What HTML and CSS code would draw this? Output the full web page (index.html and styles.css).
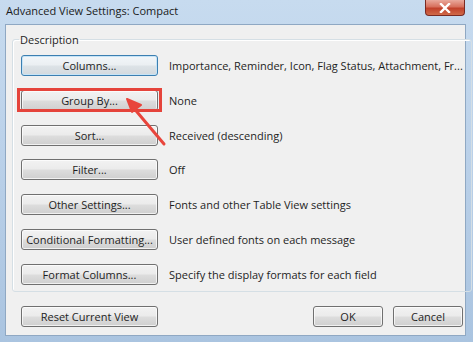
FILE: index.html
```html
<!DOCTYPE html>
<html lang="en">
<head>
    <meta charset="UTF-8">
    <title>Advanced View Settings: Compact</title>
    <link rel="stylesheet" href="styles.css">
</head>
<body>
    <div class="window">
        <div class="titlebar">
            <span class="title">Advanced View Settings: Compact</span>
            <span class="close-btn">
                <svg width="12" height="10" viewBox="0 0 12 10">
                    <path d="M2 1 L10 9 M10 1 L2 9" stroke="#fff" stroke-width="2.4" stroke-linecap="square"/>
                </svg>
            </span>
        </div>
        <div class="client">
            <fieldset class="group-box">
                <legend>Description</legend>
                <div class="settings-grid">
                    <button class="btn focused">Columns...</button>
                    <span class="desc">Importance, Reminder, Icon, Flag Status, Attachment, Fr...</span>

                    <span class="highlight-wrap">
                        <button class="btn">Group By...</button>
                        <span class="highlight"></span>
                    </span>
                    <span class="desc">None</span>

                    <button class="btn">Sort...</button>
                    <span class="desc">Received (descending)</span>

                    <button class="btn">Filter...</button>
                    <span class="desc">Off</span>

                    <button class="btn">Other Settings...</button>
                    <span class="desc">Fonts and other Table View settings</span>

                    <button class="btn">Conditional Formatting...</button>
                    <span class="desc">User defined fonts on each message</span>

                    <button class="btn">Format Columns...</button>
                    <span class="desc">Specify the display formats for each field</span>
                </div>
            </fieldset>

            <div class="footer">
                <button class="btn">Reset Current View</button>
                <div class="footer-right">
                    <button class="btn small">OK</button>
                    <button class="btn small">Cancel</button>
                </div>
            </div>

            <!-- annotation arrow -->
            <svg class="arrow" width="60" height="70" viewBox="0 0 60 70">
                <path d="M44 56 L12 18" stroke="#e8453c" stroke-width="3" stroke-linecap="round"/>
                <path d="M7 11 L21 17 L12 24 Z" fill="#e8453c" stroke="#e8453c" stroke-width="2" stroke-linejoin="round"/>
            </svg>
        </div>
    </div>
</body>
</html>
```

FILE: styles.css
```css
/* Base Styles */

* {
    box-sizing: border-box;
}

body {
    margin: 0;
    font-family: "Open Sans", "Noto Sans", sans-serif;
    font-size: 11px;
    color: #1e1e1e;
    background: #b9cfe6;
}

.window {
    width: 473px;
    height: 342px;
    display: flex;
    flex-direction: column;
    background: linear-gradient(to bottom, #c7dbef 0%, #bcd2ea 40%, #aac4e0 100%);
}

.titlebar {
    height: 24px;
    display: flex;
    justify-content: space-between;
    align-items: flex-start;
    padding: 0 8px 0 6px;
}

.title {
    margin-top: 3px;
    font-size: 11px;
    color: #1a1a1a;
}

.close-btn {
    width: 40px;
    height: 16px;
    display: flex;
    align-items: center;
    justify-content: center;
    border: 1px solid #7a2a22;
    border-top: none;
    border-radius: 0 0 4px 4px;
    background: linear-gradient(to bottom, #e9a99c 0%, #d7705d 45%, #c1412b 55%, #d06a48 100%);
}

.client {
    position: relative;
    flex: 1;
    margin: 0 7px 6px 5px;
    background: #f0f0f0;
    border: 1px solid #8fa8c3;
    padding: 0 2px 0 6px;
}

.group-box {
    margin: 7px 0 0 0;
    padding: 8px 8px 6px 8px;
    border: 1px solid #d5dfe5;
    border-radius: 3px;
    box-shadow: inset 1px 1px 0 #fff;
    width: 451px;
}

.group-box legend {
    padding: 0 1px;
    margin-left: -2px;
    font-size: 11px;
}

.settings-grid {
    display: grid;
    grid-template-columns: 137px 1fr;
    grid-auto-rows: 21px;
    row-gap: 13.8px;
    column-gap: 11px;
    align-items: center;
}

.desc {
    white-space: nowrap;
    font-size: 11px;
}

.btn {
    height: 21px;
    width: 137px;
    padding: 0;
    font-family: inherit;
    font-size: 11px;
    color: #1e1e1e;
    border: 1px solid #707070;
    border-radius: 3px;
    background: linear-gradient(to bottom, #f2f2f2 0%, #ebebeb 48%, #dddddd 52%, #cfcfcf 100%);
    box-shadow: inset 0 0 0 1px rgba(255, 255, 255, 0.7);
}

.btn.focused {
    border-color: #3c7fb1;
    box-shadow: inset 0 0 0 1px #c6e4f7;
    background: linear-gradient(to bottom, #f2f6f9 0%, #ebeff2 48%, #dde3e7 52%, #d3d9de 100%);
}

.btn.small {
    width: 70px;
}

.highlight-wrap {
    position: relative;
    display: block;
    height: 21px;
}

.highlight {
    position: absolute;
    top: -2px;
    left: -4px;
    right: -4px;
    bottom: -1px;
    border: 3px solid #e5443b;
}

.footer {
    display: flex;
    justify-content: space-between;
    margin-top: 14px;
    padding: 0 0 0 9px;
    width: 451px;
}

.footer-right {
    display: flex;
    gap: 10px;
}

.arrow {
    position: absolute;
    left: 114px;
    top: 63px;
}
```
